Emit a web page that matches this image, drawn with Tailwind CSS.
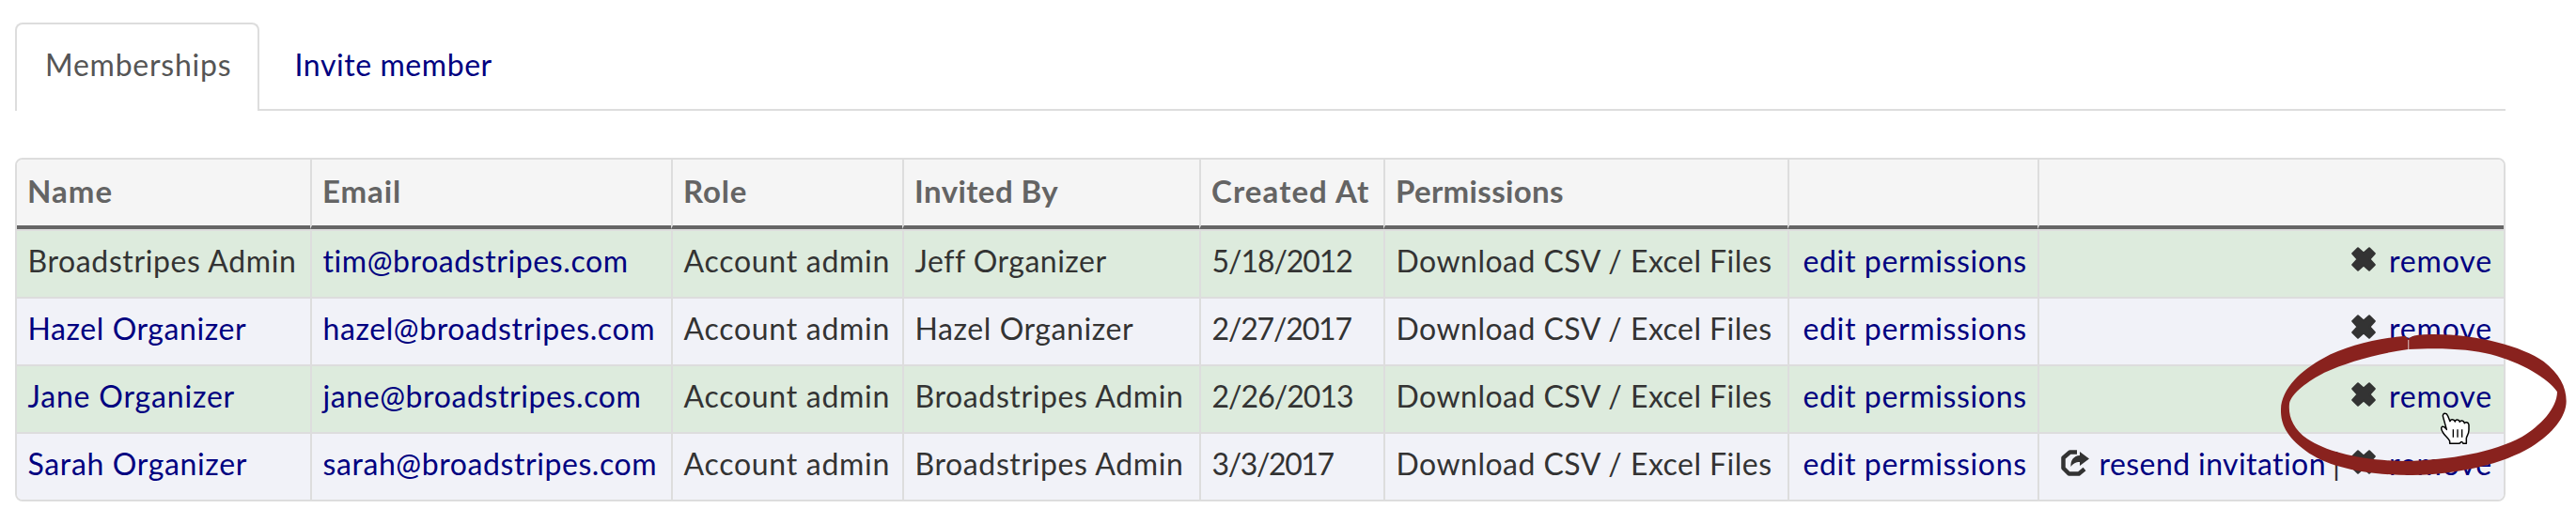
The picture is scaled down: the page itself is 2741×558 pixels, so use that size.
<!DOCTYPE html>
<html lang="en">
<head>
<meta charset="utf-8">
<title>Memberships</title>
<script src="https://cdn.jsdelivr.net/npm/@tailwindcss/browser@4"></script>
</head>
<body class="relative h-[558px] w-[2741px] overflow-hidden bg-white font-['Lato',sans-serif] text-[32px] leading-[40px] whitespace-nowrap text-[#333]">
<svg class="hidden">
  <symbol id="remove" viewBox="0 0 26 26"><path d="M7 1.200L13 6.600 19 1.200 24.800 7 19.400 13 24.800 19 19 24.800 13 19.400 7 24.800 1.200 19 6.600 13 1.200 7z" fill="#333" stroke="#333" stroke-width="2" stroke-linejoin="round"/></symbol>
  <symbol id="share" viewBox="0 0 30 28"><path d="M17 2.500H9.500L2.500 8.500V19.500L8.500 25.500H19L25 20.500" fill="none" stroke="#333" stroke-width="4.500" stroke-linejoin="round"/><path d="M20 2L30 9.500 20 17V13C15.500 13 13 14.500 10.500 18 10 11 13.500 6.500 20 6z" fill="#333"/></symbol>
</svg>
<div class="ml-4 w-[2650px] pt-6">
  <nav class="flex h-[94px] border-b-2 border-[#ddd]">
    <div class="-mb-0.5 w-[260px] rounded-t-lg border-2 border-b-0 border-[#ddd] bg-white pt-[23px] pl-[30px] tracking-[0.75px] text-[#555]">Memberships</div>
    <a class="pt-[25px] pl-[37.500px] tracking-[0.57px] text-[#000080]">Invite member</a>
  </nav>
  <div class="mt-[50px] overflow-hidden rounded-lg border-2 border-[#ddd]">
    <table class="w-full table-fixed border-separate border-spacing-0">
      <colgroup><col class="w-[312px]"><col class="w-[384px]"><col class="w-[246px]"><col class="w-[316px]"><col class="w-[196px]"><col class="w-[430px]"><col class="w-[266px]"><col class="w-[496px]"></colgroup>
      <thead class="bg-[#f5f5f5] text-left text-[33px] text-[#646464] [&_th]:h-[74px] [&_th]:border-b-4 [&_th]:border-l-2 [&_th]:border-b-[#666] [&_th]:border-l-[#ddd] [&_th]:p-0 [&_th]:pb-1 [&_th]:pl-[11px] [&_th]:font-bold [&_th:first-child]:border-l-0">
        <tr><th><span class="tracking-[1.05px]">Name</span></th><th><span class="tracking-[0.9px]">Email</span></th><th><span class="tracking-[0.83px]">Role</span></th><th><span class="tracking-[0.43px]">Invited By</span></th><th><span class="tracking-[1.1px]">Created At</span></th><th><span class="tracking-[0.34px]">Permissions</span></th><th></th><th></th></tr>
      </thead>
      <tbody class="[&_a]:text-[#000080] [&_td]:h-[72px] [&_td]:border-t-2 [&_td]:border-l-2 [&_td]:border-[#ddd] [&_td]:p-0 [&_td]:pb-1.5 [&_td]:pl-[11.500px] [&_td:first-child]:border-l-0 [&_tr:nth-child(odd)]:bg-[#ddebdd] [&_tr:nth-child(even)]:bg-[#f1f2f8]">
        <tr>
          <td><span class="tracking-[0.62px]">Broadstripes Admin</span></td>
          <td><a class="tracking-[0.58px]">tim@broadstripes.com</a></td>
          <td><span class="tracking-[0.72px]">Account admin</span></td>
          <td><span class="tracking-[0.5px]">Jeff Organizer</span></td>
          <td><span class="tracking-[-1.06px]">5/18/2012</span></td>
          <td><span class="tracking-[0.47px]">Download CSV / Excel Files</span></td>
          <td><a class="ml-[3px] tracking-[0.64px]">edit permissions</a></td>
          <td><div class="flex items-center justify-end pr-3"><svg class="mr-3.5 mb-1 h-[26px] w-[26px]"><use href="#remove"/></svg><a class="tracking-[0.87px]">remove</a></div></td>
        </tr>
        <tr>
          <td><a class="tracking-[0.58px]">Hazel Organizer</a></td>
          <td><a class="tracking-[0.6px]">hazel@broadstripes.com</a></td>
          <td><span class="tracking-[0.72px]">Account admin</span></td>
          <td><span class="tracking-[0.58px]">Hazel Organizer</span></td>
          <td><span class="tracking-[-1.16px]">2/27/2017</span></td>
          <td><span class="tracking-[0.47px]">Download CSV / Excel Files</span></td>
          <td><a class="ml-[3px] tracking-[0.64px]">edit permissions</a></td>
          <td><div class="flex items-center justify-end pr-3"><svg class="mr-3.5 mb-1 h-[26px] w-[26px]"><use href="#remove"/></svg><a class="tracking-[0.87px]">remove</a></div></td>
        </tr>
        <tr>
          <td><a class="tracking-[0.82px]">Jane Organizer</a></td>
          <td><a class="tracking-[0.6px]">jane@broadstripes.com</a></td>
          <td><span class="tracking-[0.72px]">Account admin</span></td>
          <td><span class="tracking-[0.62px]">Broadstripes Admin</span></td>
          <td><span class="tracking-[-0.97px]">2/26/2013</span></td>
          <td><span class="tracking-[0.47px]">Download CSV / Excel Files</span></td>
          <td><a class="ml-[3px] tracking-[0.64px]">edit permissions</a></td>
          <td><div class="flex items-center justify-end pr-3"><svg class="mr-3.5 mb-1 h-[26px] w-[26px]"><use href="#remove"/></svg><a class="tracking-[0.87px]">remove</a></div></td>
        </tr>
        <tr>
          <td><a class="tracking-[0.65px]">Sarah Organizer</a></td>
          <td><a class="tracking-[0.58px]">sarah@broadstripes.com</a></td>
          <td><span class="tracking-[0.72px]">Account admin</span></td>
          <td><span class="tracking-[0.62px]">Broadstripes Admin</span></td>
          <td><span class="tracking-[-1.39px]">3/3/2017</span></td>
          <td><span class="tracking-[0.47px]">Download CSV / Excel Files</span></td>
          <td><a class="ml-[3px] tracking-[0.64px]">edit permissions</a></td>
          <td><div class="flex items-center justify-end pr-3"><svg class="mr-[11px] mb-0.5 h-7 w-[30px]"><use href="#share"/></svg><a class="tracking-[0.41px]">resend invitation</a><span class="flex w-[27px] justify-center pr-[5px]">|</span><svg class="mr-3.5 mb-1 h-[26px] w-[26px]"><use href="#remove"/></svg><a class="tracking-[0.87px]">remove</a></div></td>
        </tr>
      </tbody>
    </table>
  </div>
</div>
<!-- hand-drawn highlight ring -->
<svg class="absolute top-[340px] left-[2400px] h-[180px] w-[341px]" viewBox="0 0 1023 540">
  <path fill="#89221e" fill-rule="evenodd" d="M487 62L478 53C400 60 290 82 215 125C150 160 82 220 81 288C80 330 95 372 160 420C230 472 350 498 500 498C650 495 790 462 880 408C950 365 992 310 992 262C992 215 970 175 920 135C850 85 700 46 560 48Q510 49 498 56ZM487 96C390 109 290 138 220 170C170 195 112 238 108 270C104 310 120 350 165 382C230 425 340 452 480 453C620 450 760 425 850 376C910 340 962 285 963 232C935 190 850 138 750 112C690 96 600 90 487 96Z"/>
  <path d="M488 66V96" stroke="#c99c9a" stroke-width="4"/>
</svg>
<!-- pointing hand cursor -->
<svg class="absolute top-[430px] left-[2590px] h-[50px] w-[50px]" viewBox="0 0 150 150">
  <path d="M29 43C26 35 30 31 35 31C40 31 42 34 44 39L51 56C52 48 64 48 67 57C68 49 80 49 82 58C84 52 95 52 97 62C99 57 110 58 111 67V84C111 96 104 103 103 110V127H93Q90 120 86 122Q82 127 78 127H50V119C46 109 34 103 28 91C24 84 20 76 26 73C32 71 36 77 40 82Z" fill="#fff" stroke="#000" stroke-width="4.500" stroke-linejoin="round"/>
  <path d="M61 82V107M75 82V107M89 82V107" stroke="#000" stroke-width="4"/>
</svg>
</body>
</html>
